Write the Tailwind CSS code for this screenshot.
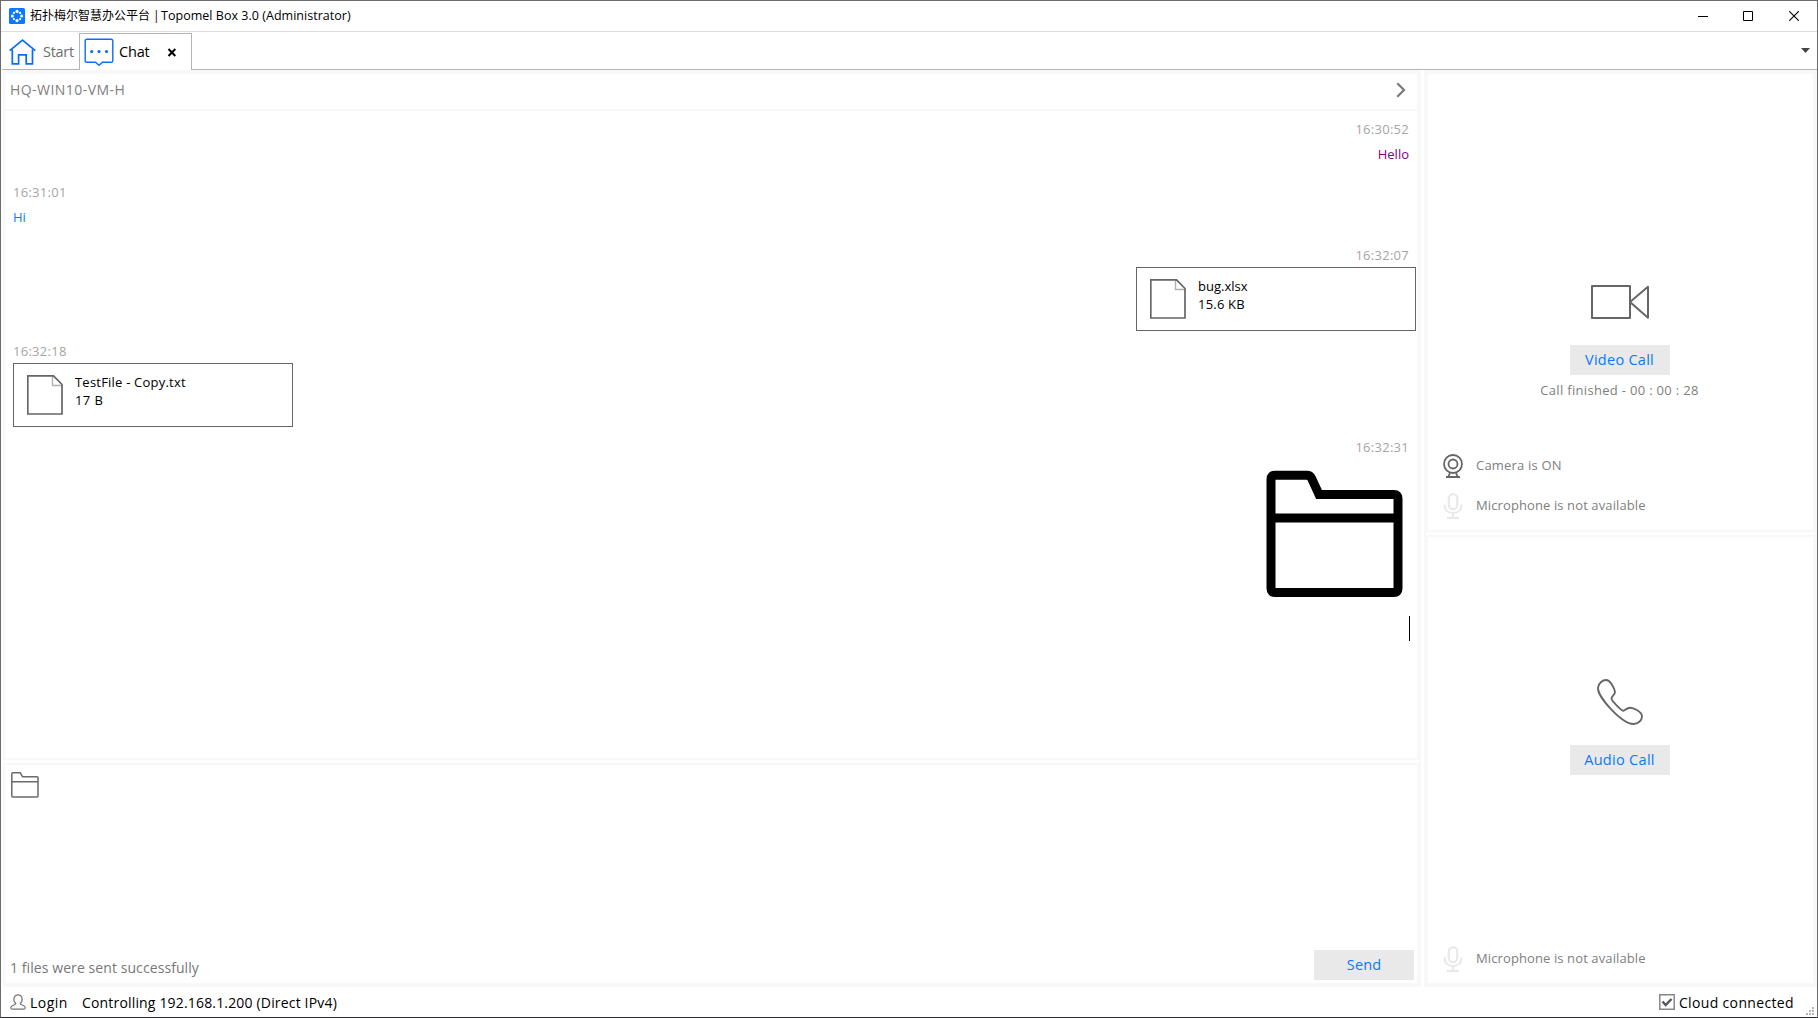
<!DOCTYPE html>
<html lang="en">
<head>
<meta charset="utf-8">
<title>Topomel Box</title>
<script src="https://cdn.jsdelivr.net/npm/@tailwindcss/browser@4"></script>
</head>
<body class="h-[1018px] w-[1818px] overflow-hidden bg-white font-['Open_Sans','Noto_Sans_CJK_SC',sans-serif] text-[13px] whitespace-nowrap text-black">
<div class="flex h-full w-full flex-col border border-[#6b6b6b] border-b-[#2b2b30]">

  <!-- Title bar -->
  <header class="flex h-[30px] shrink-0 items-center pl-2">
    <svg class="mr-[5px] h-4 w-4" viewBox="0 0 16 16"><rect width="16" height="16" rx="1.5" fill="#0a78ff"/><g fill="#fff"><circle cx="8" cy="3.400" r="1.600"/><circle cx="8" cy="12.600" r="1.600"/><circle cx="3.400" cy="8" r="1.500"/><circle cx="12.600" cy="8" r="1.500"/><circle cx="4.900" cy="4.900" r="1.100"/><circle cx="11.100" cy="4.900" r="1.100"/><circle cx="4.900" cy="11.100" r="1.100"/><circle cx="11.100" cy="11.100" r="1.100"/></g></svg>
    <div class="flex text-[12px] leading-none"><span class="w-[125px]">拓扑梅尔智慧办公平台 |</span><span class="pl-[6px] text-[12.5px] tracking-[0.03px]">Topomel Box 3.0 (Administrator)</span></div>
    <div class="ml-auto flex items-center gap-[35px] pr-[18px]">
      <svg class="h-[11px] w-[10px]" viewBox="0 0 10 11"><path d="M0 5.500h10" stroke="#000"/></svg>
      <svg class="h-[10px] w-[10px]" viewBox="0 0 10 10"><path d="M.5.5h9v9h-9z" fill="none" stroke="#000"/></svg>
      <svg class="ml-px h-[10px] w-[10px]" viewBox="0 0 10 10"><path d="M.2.2l9.600 9.600M9.800.2L.2 9.800" stroke="#000" stroke-width="1.100"/></svg>
    </div>
  </header>

  <!-- Tabs -->
  <nav class="flex h-[39px] shrink-0 border-t border-[#dcdcdc] pl-px text-[14.500px]">
    <div class="flex w-[77px] items-center border-b border-[#b4b4b4] pl-[7px] text-[#6d6d6d]">
      <svg class="mt-[2px] h-[26px] w-[27px]" viewBox="0 0 27 26" fill="none" stroke="#0a6cff" stroke-width="1.700"><path d="M.7 11.600L13.500 1.200l12.800 10.400M3.300 10.500v14.300h6.300v-9h7.600v9h6.300V10.500"/></svg>
      <span class="pt-[2px] pl-[7px] tracking-[-0.3px]">Start</span>
    </div>
    <div class="mt-px flex w-[113px] items-center border border-b-0 border-[#b4b4b4] pl-[4px]">
      <svg class="-mt-px h-[28px] w-[30px]" viewBox="0 0 30 28" fill="none" stroke="#0a6cff" stroke-width="1.400"><path d="M3 1.200h24q1.800 0 1.800 1.800v20q0 1.300-1.800 1.300h-8.500l-3.500 3-3.500-3H3q-1.800 0-1.800-1.300v-20q0-1.800 1.800-1.800z"/><g fill="#0a6cff" stroke="none"><circle cx="7.700" cy="13.500" r="1.600"/><circle cx="15" cy="13.500" r="1.600"/><circle cx="22.500" cy="13.500" r="1.600"/></g></svg>
      <span class="pl-[5px] tracking-[-0.2px]">Chat</span>
      <svg class="mr-[14px] ml-auto h-[9px] w-[10px]" viewBox="0 0 10 9"><path d="M1.500 1l6.800 7M8.300 1L1.500 8" stroke="#000" stroke-width="2"/></svg>
    </div>
    <div class="flex flex-1 items-center justify-end border-b border-[#b4b4b4] pr-[7px]">
      <svg class="h-[5px] w-[9px]" viewBox="0 0 9 5"><path d="M0 0h9L4.500 5z" fill="#444"/></svg>
    </div>
  </nav>

  <main class="flex h-[917px] shrink-0 gap-[3px] pl-[2px] text-[#808080]">
    <!-- Conversation -->
    <section class="flex w-[1418px] shrink-0 flex-col border-t-4 border-r-4 border-b-4 border-l-2 border-[#f8f8f8]">
      <div class="flex h-[35px] items-center justify-between pr-[11px] pb-[3px] pl-[5px]">
        <span class="-mt-px pb-px text-[14px] tracking-[0.45px]">HQ-WIN10-VM-H</span>
        <svg class="h-4 w-[10px]" viewBox="0 0 10 16"><path d="M1.300 1.200L8 8l-6.700 6.800" fill="none" stroke="#7a7a7a" stroke-width="2.200"/></svg>
      </div>
      <div class="h-[651px] border-y-2 border-[#f8f8f8] pt-[6px] pr-px pl-2">
        <article class="flex h-[63px] flex-col items-end pr-[6px] text-right">
          <time class="h-6 pr-px leading-6 tracking-[0.27px] text-[#a5a5a5]">16:30:52</time>
          <p class="h-[26px] pr-px leading-[26px] text-[#800080]">Hello</p>
        </article>
        <article class="h-[63px]">
          <time class="block h-6 leading-6 tracking-[0.27px] text-[#a5a5a5]">16:31:01</time>
          <p class="h-[26px] leading-[26px] text-[#0a7bff]">Hi</p>
        </article>
        <article class="flex h-24 flex-col items-end">
          <time class="h-6 pr-[7px] leading-6 tracking-[0.27px] text-[#a5a5a5]">16:32:07</time>
          <div class="flex h-16 w-[280px] border border-[#666] pt-[11px] pl-[13px]">
            <svg class="h-10 w-9" viewBox="0 0 36 40" fill="none"><path d="M25.500 1v9.500H35" stroke="#b0b0b0" stroke-width="1.400"/><path d="M.8.8h25.700L35 9.500v29.500H.8z" stroke="#666" stroke-width="1.700"/></svg>
            <div class="-mt-[2px] pl-3 leading-[18px] text-black"><p>bug.xlsx</p><p class="tracking-[0.2px]">15.6 KB</p></div>
          </div>
        </article>
        <article class="h-24">
          <time class="block h-6 leading-6 tracking-[0.27px] text-[#a5a5a5]">16:32:18</time>
          <div class="flex h-16 w-[280px] border border-[#666] pt-[11px] pl-[13px]">
            <svg class="h-10 w-9" viewBox="0 0 36 40" fill="none"><path d="M25.500 1v9.500H35" stroke="#b0b0b0" stroke-width="1.400"/><path d="M.8.8h25.700L35 9.500v29.500H.8z" stroke="#666" stroke-width="1.700"/></svg>
            <div class="-mt-[2px] pl-3 leading-[18px] tracking-[0.21px] text-black"><p>TestFile - Copy.txt</p><p class="tracking-[0.4px]">17 B</p></div>
          </div>
        </article>
        <article class="flex flex-col items-end pr-[6px]">
          <time class="h-6 pr-px leading-6 tracking-[0.27px] text-[#a5a5a5]">16:32:31</time>
          <svg class="mt-[11px] mr-[7px] h-[128px] w-[137px]" viewBox="0 0 137 128" fill="none" stroke="#000" stroke-width="9"><path d="M9 5.200h32q3 0 4.500 3l7.500 16.300h75q4 0 4 4V118.500q0 4-4 4H9q-4 0-4-4V9.200q0-4 4-4z"/><path d="M5 48h127"/></svg>
          <i class="mt-[18px] h-[25px] w-px bg-black"></i>
        </article>
      </div>
      <div class="-ml-[2px] h-[3px] w-[1416px] shrink-0 bg-white"></div>
      <div class="flex flex-1 flex-col justify-between border-t-2 border-[#f8f8f8] pt-[7px] pr-[3px] pb-[3px] pl-[6px]">
        <svg class="h-[26px] w-7" viewBox="0 0 28 26" fill="none" stroke="#6b6b6b" stroke-width="1.500"><path d="M1.800.8h7.400l2.400 4H26q1 0 1 1V24q0 1-1 1H1.800q-1 0-1-1V1.800q0-1 1-1zM.8 9.700H27"/></svg>
        <div class="flex items-center justify-between">
          <span class="-ml-px pt-[5px] text-[14px] tracking-[0.08px] text-[#777]">1 files were sent successfully</span>
          <button class="h-[30px] w-[100px] bg-[#e9e9e9] text-[14.500px] tracking-[0.1px] text-[#0a78ff]">Send</button>
        </div>
      </div>
    </section>

    <!-- Calls -->
    <section class="flex min-w-0 flex-1 flex-col border-4 border-[#f8f8f8]">
      <div class="flex h-[458px] shrink-0 flex-col items-center border-b-2 border-[#f8f8f8] pt-[211px] pr-[2px]">
        <svg class="h-[34px] w-[58px]" viewBox="0 0 58 34" fill="none" stroke="#666" stroke-width="2" stroke-linejoin="round"><path d="M1 1h38v32H1zM39 17L57 1.800v31z"/></svg>
        <button class="mt-[26px] h-[30px] w-[100px] bg-[#e9e9e9] text-[14.500px] tracking-[0.27px] text-[#0a78ff]">Video Call</button>
        <p class="h-[30px] leading-[30px] tracking-[0.32px]">Call finished - 00 : 00 : 28</p>
        <div class="mt-[41px] flex w-full flex-col pl-[15px]">
          <div class="flex h-10 items-center gap-[13px]">
            <svg class="-mt-px h-6 w-5" viewBox="0 0 20 24" fill="none" stroke="#666" stroke-width="1.800"><circle cx="10" cy="10" r="9"/><circle cx="10" cy="10" r="4.500"/><path d="M7 18.800L5.500 22.500M13 18.800l1.500 3.700M3 23h14" /></svg>
            <span class="tracking-[0.2px]">Camera is ON</span>
          </div>
          <div class="flex h-10 items-center gap-[13px]">
            <svg class="-mt-px h-[26px] w-5" viewBox="0 0 20 26" fill="none" stroke="#e9e9e9" stroke-width="2.200"><rect x="5.800" y="1.100" width="8.400" height="15" rx="4.200"/><path d="M1.500 11.500c0 5.500 3.500 8.500 8.500 8.500s8.500-3 8.500-8.500M10 20v4M4 24.900h12"/></svg>
            <span class="tracking-[0.11px]">Microphone is not available</span>
          </div>
        </div>
      </div>
      <div class="-ml-[2px] h-[3px] w-[389px] shrink-0 bg-white"></div>
      <div class="flex flex-1 flex-col items-center border-t-2 border-[#f8f8f8] pt-[142px] pr-[2px]">
        <svg class="h-[46px] w-[46px]" viewBox="0 0 46 46" fill="none" stroke="#666" stroke-width="1.900"><path d="M1.200 8C2 4 5.500 1 9 1c3 0 4 1.800 5.500 4 2 3 3.800 5.500 3.300 8.800-.4 2.200-3.500 3.700-3.300 5.700.2 2.300 9.500 12 11.700 12.200 2 .2 3-3 7-3 3 0 11.800 3.800 11.800 8.800 0 4-4 7.500-8.500 7.500C25 45-1 17 1.200 8z"/></svg>
        <button class="mt-5 h-[30px] w-[100px] bg-[#e9e9e9] text-[14.500px] tracking-[0.3px] text-[#0a78ff]">Audio Call</button>
        <div class="mt-auto mb-1 flex h-10 w-full items-center gap-[13px] pl-[15px]">
          <svg class="-mt-px h-[26px] w-5" viewBox="0 0 20 26" fill="none" stroke="#e9e9e9" stroke-width="2.200"><rect x="5.800" y="1.100" width="8.400" height="15" rx="4.200"/><path d="M1.500 11.500c0 5.500 3.500 8.500 8.500 8.500s8.500-3 8.500-8.500M10 20v4M4 24.900h12"/></svg>
          <span class="tracking-[0.11px]">Microphone is not available</span>
        </div>
      </div>
    </section>
  </main>

  <!-- Status bar -->
  <footer class="relative flex flex-1 items-center pr-[23px] pl-[9px] text-[14px]">
    <svg class="h-4 w-4" viewBox="0 0 16 16" fill="none" stroke="#777" stroke-width="1.200"><path d="M5.800 9.500C2.500 7 3.500.8 8 .8s5.500 6.200 2.200 8.700c-.3 1.500 5 1.500 5 4.200 0 1-.4 1.500-1.400 1.500H2.200c-1 0-1.400-.5-1.400-1.500 0-2.700 5.300-2.700 5-4.200z"/></svg>
    <span class="w-[56px] pl-1 tracking-[0.45px]">Login</span>
    <span class="tracking-[0.17px]">Controlling 192.168.1.200 (Direct IPv4)</span>
    <svg class="mr-1 ml-auto h-4 w-4" viewBox="0 0 16 16" fill="none"><path d="M.8.8h14.400v14.400H.8z" stroke="#888" stroke-width="1.500"/><path d="M3.500 7.500l3.200 3.500 5.800-6" stroke="#555" stroke-width="2.400"/></svg>
    <span class="tracking-[0.35px]">Cloud connected</span>
    <svg class="absolute right-[3px] bottom-[2px] h-2 w-2" viewBox="0 0 8 8" fill="#b5b5b5"><path d="M6 0h2v2H6zM3 3h2v2H3zM6 3h2v2H6zM0 6h2v2H0zM3 6h2v2H3zM6 6h2v2H6z"/></svg>
  </footer>
</div>
</body>
</html>
